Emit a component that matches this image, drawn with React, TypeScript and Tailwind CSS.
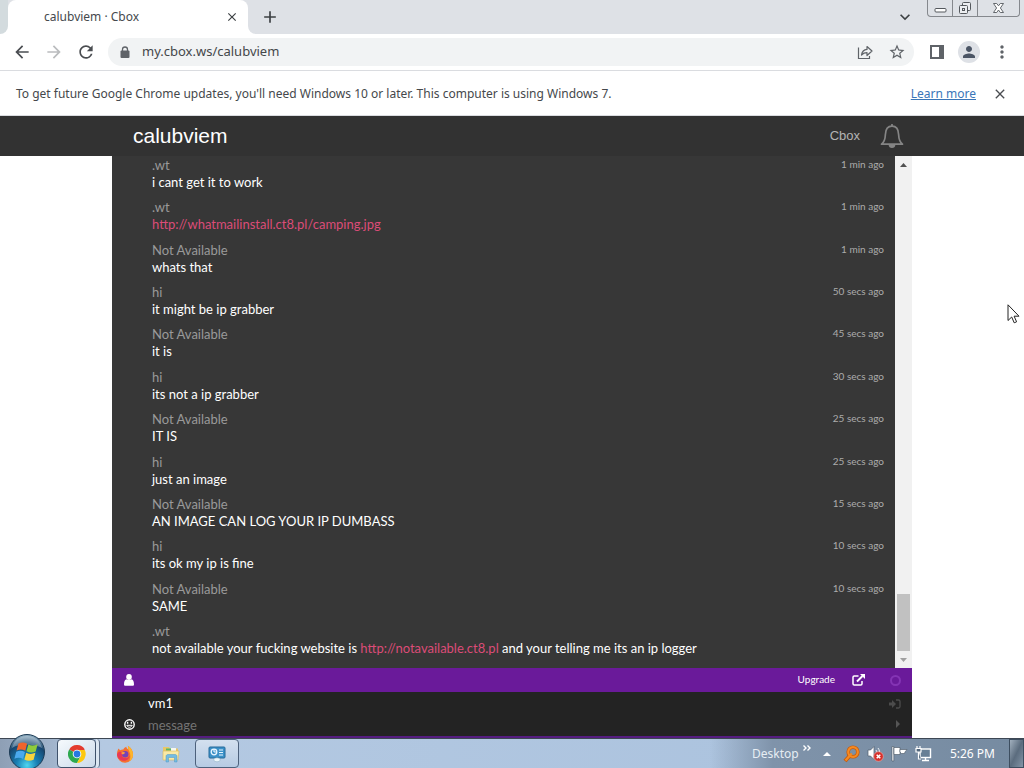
import { useState } from "react";
import {
  MdArrowBack,
  MdArrowForward,
  MdRefresh,
  MdStarOutline,
  MdPerson,
  MdMoreVert,
  MdClose,
  MdAdd,
  MdKeyboardArrowDown,
} from "react-icons/md";

type Message = {
  name: string;
  time: string;
  text?: string;
  link?: string;
  after?: string;
};

const messages: Message[] = [
  { name: ".wt", time: "1 min ago", text: "i cant get it to work" },
  { name: ".wt", time: "1 min ago", link: "http://whatmailinstall.ct8.pl/camping.jpg" },
  { name: "Not Available", time: "1 min ago", text: "whats that" },
  { name: "hi", time: "50 secs ago", text: "it might be ip grabber" },
  { name: "Not Available", time: "45 secs ago", text: "it is" },
  { name: "hi", time: "30 secs ago", text: "its not a ip grabber" },
  { name: "Not Available", time: "25 secs ago", text: "IT IS" },
  { name: "hi", time: "25 secs ago", text: "just an image" },
  { name: "Not Available", time: "15 secs ago", text: "AN IMAGE CAN LOG YOUR IP DUMBASS" },
  { name: "hi", time: "10 secs ago", text: "its ok my ip is fine" },
  { name: "Not Available", time: "10 secs ago", text: "SAME" },
  {
    name: ".wt",
    time: "",
    text: "not available your fucking website is ",
    link: "http://notavailable.ct8.pl",
    after: " and your telling me its an ip logger",
  },
];

const TabStrip = () => (
  <div className="flex h-[34px] shrink-0 items-start bg-[#dee1e6]">
    <div className="h-full w-2 bg-white">
      <div className="h-full rounded-br-lg bg-[#d3dbde]" />
    </div>
    <div className="flex h-full w-60 items-center justify-between rounded-t-lg bg-white pr-2 pl-9 text-xs text-[#45494d]">
      <span>calubviem · Cbox</span>
      <button aria-label="Close tab" className="flex size-4 items-center justify-center">
        <MdClose className="size-3.5 text-[#3c4043]" />
      </button>
    </div>
    <div className="h-full w-2 bg-white">
      <div className="h-full rounded-bl-lg bg-[#dee1e6]" />
    </div>
    <button aria-label="New tab" className="ml-1 flex h-full w-5 items-center justify-center">
      <MdAdd className="size-5 shrink-0 text-[#3c4043]" />
    </button>
    <button aria-label="Search tabs" className="mr-3 ml-auto flex h-full items-center">
      <MdKeyboardArrowDown className="size-5 text-[#3c4043]" />
    </button>
    <div className="mr-1 flex h-[17px] rounded-b-sm border border-t-0 border-[#85888d] text-[#54585d]">
      <button aria-label="Minimize" className="flex w-[25px] items-center justify-center border-r border-[#85888d]">
        <svg width="13" height="16" viewBox="0 0 13 16" fill="#fff" stroke="currentColor">
          <rect x="1" y="8.5" width="11" height="3.5" rx="1" />
        </svg>
      </button>
      <button aria-label="Restore" className="flex w-[25px] items-center justify-center border-r border-[#85888d]">
        <svg width="14" height="16" viewBox="0 0 14 16" fill="#eceef1" stroke="currentColor">
          <rect x="4.5" y="2.5" width="8" height="8" rx="1" />
          <rect x="1.5" y="5.5" width="8" height="8" rx="1" />
          <rect x="4.5" y="8.5" width="2" height="2" />
        </svg>
      </button>
      <button aria-label="Close" className="flex w-[41px] items-center justify-center">
        <svg width="13" height="16" viewBox="0 0 13 16" fill="#fff" stroke="currentColor" strokeWidth=".9">
          <path d="M1.5 3.5h3.2l1.8 2.3 1.8-2.3h3.2L8.4 8l3.1 4.5H8.3L6.5 10l-1.8 2.5H1.5L4.6 8z" />
        </svg>
      </button>
    </div>
  </div>
);

const Toolbar = () => (
  <div className="flex h-[37px] shrink-0 items-center border-b border-[#dadce0] bg-white px-3 text-[#5f6368]">
    <div className="flex items-center gap-3">
      <button aria-label="Back"><MdArrowBack className="size-5 text-[#4a4d51]" /></button>
      <button aria-label="Forward"><MdArrowForward className="size-5 text-[#babcbe]" /></button>
      <button aria-label="Reload"><MdRefresh className="size-5 text-[#4a4d51]" /></button>
    </div>
    <div className="ml-3 flex h-7 flex-1 items-center rounded-full bg-[#f1f3f4] px-2">
      <svg className="mx-1" width="10" height="13" viewBox="0 0 10 13">
        <path d="M2.500 5V3.500a2.500 2.500 0 0 1 5 0V5" fill="none" stroke="currentColor" strokeWidth="1.300" />
        <rect x=".5" y="4.500" width="9" height="7.500" rx="1" fill="currentColor" />
      </svg>
      <input
        aria-label="Address"
        readOnly
        value="my.cbox.ws/calubviem"
        className="ml-2 min-w-0 flex-1 bg-transparent text-[13px] text-[#44474a] outline-none"
      />
      <button aria-label="Share" className="mr-[15px]">
        <svg width="16" height="16" viewBox="0 0 16 16" fill="none" stroke="currentColor" strokeWidth="1.2">
          <path d="M1.500 3.500v11h11V12" />
          <path d="M4.500 11C5 7.600 7 5.600 10 5.400V2.500L15 7l-5 4.500V8.700C7.500 8.700 6 9.400 4.500 11z" strokeLinejoin="round" />
        </svg>
      </button>
      <button aria-label="Bookmark"><MdStarOutline className="size-[18px]" /></button>
    </div>
    <button aria-label="Side panel" className="ml-4">
      <svg width="14" height="14" viewBox="0 0 14 14" fill="currentColor">
        <path d="M0 0h14v14H0zM2 2v10h7V2z" fillRule="evenodd" />
      </svg>
    </button>
    <button aria-label="Profile" className="ml-3.5 flex size-[22px] items-center justify-center rounded-full bg-[#dee1e6]">
      <MdPerson className="size-[18px] text-[#4b5565]" />
    </button>
    <button aria-label="Menu" className="ml-3"><MdMoreVert className="size-5" /></button>
  </div>
);

const InfoBar = () => (
  <div className="flex h-[45px] shrink-0 items-center border-b border-[#dadce0] bg-white px-4 pt-px text-[#45484b]">
    <p className="flex-1 whitespace-nowrap">
      To get future Google Chrome updates, you'll need Windows 10 or later. This computer is using Windows 7.
    </p>
    <a href="#learn" className="text-[#3a76b8] underline">Learn more</a>
    <button aria-label="Dismiss" className="ml-4"><MdClose className="size-4 text-[#4a4d51]" /></button>
  </div>
);

const SiteHeader = () => (
  <header className="h-10 shrink-0 bg-[#323232] font-['Liberation_Sans',sans-serif]">
    <div className="mx-auto flex h-full max-w-[800px] items-center pr-2 pl-[21px]">
      <h1 className="flex-1 text-[21px] text-white">calubviem</h1>
      <a href="#cbox" className="text-[13px] text-[#b4b4b4]">Cbox</a>
      <button aria-label="Notifications" className="ml-5">
        <svg width="24" height="26" viewBox="0 0 24 26" fill="none" stroke="#858585" strokeWidth="1.7">
          <path d="M1.500 21.200C4.500 19 5.200 16.500 5.400 11.500C5.600 6.500 7.800 3.200 12 3.200s6.400 3.300 6.600 8.300c.2 5 .9 7.500 3.900 9.700z" strokeLinejoin="round" />
          <path d="M12 1v2" />
          <path d="M9.500 22c.2 3 4.800 3 5 0z" fill="#858585" />
        </svg>
      </button>
    </div>
  </header>
);

const MessageRow = ({ name, time, text, link, after }: Message) => (
  <li className="flex items-start text-[13px] leading-[17px]">
    <div className="flex-1">
      <div className="text-[#9a9a9a]">{name}</div>
      <div className="text-white">
        {text}
        {link && <a href={link} className="text-[#dc4c78]">{link}</a>}
        {after}
      </div>
    </div>
    <time className="text-[10px] leading-[15px] text-[#acacac]">{time}</time>
  </li>
);

const Scrollbar = () => (
  <div className="flex w-[17px] shrink-0 flex-col items-center bg-[#f1f1f1]">
    <button aria-label="Scroll up" className="flex h-[17px] items-center">
      <svg width="7" height="4" viewBox="0 0 7 4" fill="#505050"><path d="M0 4l3.500-4L7 4z" /></svg>
    </button>
    <div className="flex w-[13px] flex-1 items-end">
      <div className="h-[57px] w-full bg-[#c1c1c1]" />
    </div>
    <button aria-label="Scroll down" className="flex h-[17px] items-center">
      <svg width="7" height="4" viewBox="0 0 7 4" fill="#a0a0a0"><path d="M0 0l3.500 4L7 0z" /></svg>
    </button>
  </div>
);

const ChatForm = () => {
  const [nick, setNick] = useState("vm1");
  const [message, setMessage] = useState("");

  return (
    <form className="shrink-0 border-b-2 border-[#551c80] bg-[#232323]" onSubmit={(e) => e.preventDefault()}>
      <div className="flex h-6 items-center bg-[#6a1a9a] pr-[11px] pl-3 text-[10px] text-white">
        <svg width="10" height="12" viewBox="0 0 10 12" fill="#fff">
          <ellipse cx="5" cy="3" rx="2.800" ry="3" />
          <path d="M0 10.500C0 7 1 5.500 2.500 5.200c1.500 1.200 3.500 1.200 5 0C9 5.500 10 7 10 10.500c0 .8-.6 1.300-1.300 1.300H1.300C.6 11.800 0 11.300 0 10.500z" />
        </svg>
        <a href="#upgrade" className="ml-auto">Upgrade</a>
        <button type="button" aria-label="Pop out" className="ml-[17px]">
          <svg width="13" height="12" viewBox="0 0 13 12" fill="none" stroke="#fff" strokeWidth="1.500">
            <path d="M6.500 2H2.200C1.400 2 1 2.400 1 3.200v6.600c0 .8.400 1.200 1.200 1.200h6.600c.8 0 1.200-.4 1.200-1.200V7" />
            <path d="M5 7.500L10.500 2" strokeWidth="2" />
            <path d="M8 0h5v5z" fill="#fff" stroke="none" />
          </svg>
        </button>
        <button type="button" aria-label="Status" className="ml-[25px] size-[11px] rounded-full border-2 border-[#8434b4]" />
      </div>
      <div className="flex h-6 items-center pr-[11px] pl-9">
        <input
          aria-label="Name"
          value={nick}
          onChange={(e) => setNick(e.target.value)}
          className="min-w-0 flex-1 bg-transparent text-[13px] text-white outline-none"
        />
        <button type="button" aria-label="Log in">
          <svg width="12" height="10" viewBox="0 0 12 10" fill="#4c4c4c">
            <path d="M0 3.500h3V1l4 4-4 4V6.500H0z" />
            <path d="M7 1h2.500C10.300 1 11 1.700 11 2.500v5C11 8.300 10.300 9 9.500 9H7" fill="none" stroke="#4c4c4c" strokeWidth="1.300" />
          </svg>
        </button>
      </div>
      <div className="flex h-5 items-center pr-2 pl-3">
        <button type="button" aria-label="Smilies" className="mb-1">
          <svg width="11" height="11" viewBox="0 0 11 11" fill="none" stroke="#fff" strokeWidth="1.400">
            <circle cx="5.500" cy="5.500" r="4.700" />
            <path d="M2.800 6.300c.8 2.600 4.600 2.600 5.400 0z" strokeWidth="1" />
            <path d="M3.600 2.800v2M7.400 2.800v2" />
          </svg>
        </button>
        <input
          aria-label="Message"
          placeholder="message"
          value={message}
          onChange={(e) => setMessage(e.target.value)}
          className="ml-[13px] min-w-0 flex-1 bg-transparent text-[13px] text-white outline-none placeholder:text-[#747474]"
        />
        <button aria-label="Send" className="mb-1">
          <svg width="11" height="8" viewBox="0 0 11 8" fill="#555"><path d="M3 0l4 4-4 4z" /></svg>
        </button>
      </div>
    </form>
  );
};

const StartOrb = () => (
  <svg width="38" height="38" viewBox="0 0 38 38">
    <defs>
      <radialGradient id="orb" cx="50%" cy="88%" r="85%">
        <stop offset="0" stopColor="#4fd6f0" />
        <stop offset=".35" stopColor="#1a80b4" />
        <stop offset=".75" stopColor="#17466f" />
        <stop offset="1" stopColor="#8aa9bd" />
      </radialGradient>
    </defs>
    <circle cx="19" cy="19" r="17.500" fill="url(#orb)" stroke="#1c3a54" />
    <path d="M4 15C6 7 12 3 19 3s13 4 15 12c-8-4-21-5-30 0z" fill="#fff" opacity=".3" />
    <path d="M10.500 10.500c3.400-1.600 6-1.200 8.600.3l-1.800 7c-2.700-1.500-5.400-1.700-8.700-.4z" fill="#f0642c" />
    <path d="M20.300 11.400c3 1.600 6 1.500 9.300-.2l-1.900 7.300c-3.300 1.500-6.200 1.400-9.200-.2z" fill="#8fcb3c" />
    <path d="M8.200 18.700c3.300-1.300 6-1.100 8.700.4l-1.800 6.900c-2.700-1.600-5.300-1.700-8.700-.3z" fill="#4ba9ee" />
    <path d="M18.200 19.700c3 1.600 6 1.600 9.200.1l-1.800 6.900c-3.300 1.600-6.300 1.500-9.200-.1z" fill="#fbd43c" />
  </svg>
);

const ChromeIcon = () => (
  <svg width="18" height="18" viewBox="0 0 18 18">
    <path d="M9 9L1.200 4.500A9 9 0 0 1 16.800 4.500z" fill="#e33b2e" />
    <path d="M9 9L1.200 4.500A9 9 0 0 0 9 18L13 10.500z" fill="#2da94f" />
    <path d="M9 5h7.800A9 9 0 0 1 9 18l4-7z" fill="#fdc80f" />
    <circle cx="9" cy="9" r="4.300" fill="#fff" />
    <circle cx="9" cy="9" r="3.400" fill="#2878e0" />
  </svg>
);

const FirefoxIcon = () => (
  <svg width="18" height="18" viewBox="0 0 18 18">
    <path d="M2.500 3.500l1.600 1.800c1-.8 2-1 3.200-.9C8 3 9 2.200 10.300 1.700c.2 1.400 1 2 2.200 3C12.500 3.500 12 2 11.800.8c3 1.800 5.200 4.800 5.200 8.700A8 8 0 0 1 1 10C.8 7.500 1.500 5.300 2.500 3.500z" fill="#f6702f" />
    <path d="M11.800.8c3 1.800 5.200 4.800 5.200 8.700 0 3-1.500 5.500-3.700 6.900 1.500-3.500 1.600-7-.8-11.700C12.500 3.500 12 2 11.800.8z" fill="#fcb62d" />
    <path d="M1 10c.5 3 3 5.500 6.500 5.800 4 .2 6-2.500 6-5.300-.8 2-2.500 3-4.500 2.500C5.500 12.500 5 9 7.500 8L4 6.500C2 7 1 8.500 1 10z" fill="#e73755" />
    <circle cx="9.200" cy="9.200" r="3.200" fill="#7442b8" />
    <path d="M5 8c1.500-1.300 3-1 4.300-.2-.5 1-2 .9-2.300 1.900z" fill="#fda03a" />
  </svg>
);

const FolderIcon = () => (
  <svg width="18" height="18" viewBox="0 0 18 18">
    <path d="M1 2h6l1 1.500h8V14H1z" fill="#e9c867" />
    <path d="M4 3.500h5v2H4z" fill="#5bb86a" />
    <path d="M9 3h5v3H9z" fill="#f7f8f2" />
    <path d="M1 6h16l-1 9H1z" fill="#fae9a5" stroke="#dab95c" strokeWidth=".6" />
    <path d="M4 17V11.500C4 10 5 9.500 6 9.500h7c1 0 2 .5 2 2V17h-2.500v-4.500h-6V17z" fill="#74bce2" stroke="#4d99c7" strokeWidth=".5" />
  </svg>
);

const ControlIcon = () => (
  <svg width="18" height="18" viewBox="0 0 18 18">
    <rect x="1" y="2" width="16" height="11" rx="1" fill="#3b91c8" stroke="#276b9a" />
    <circle cx="6" cy="7" r="2.800" fill="none" stroke="#e7f5ff" strokeWidth="1.300" />
    <path d="M6 7V4.200M6 7h2.800M11 5h4M11 7.500h4M11 10h4" stroke="#e7f5ff" strokeWidth="1.200" />
    <ellipse cx="9" cy="14.800" rx="3.200" ry="2" fill="#eef7fa" stroke="#80a6bd" strokeWidth=".5" />
  </svg>
);

const TrayIcons = () => (
  <div className="flex items-center gap-[7px]">
    <svg width="17" height="18" viewBox="0 0 17 18" fill="none" stroke="#c4590d">
      <circle cx="10" cy="7" r="4.800" strokeWidth="3.600" />
      <path d="M6.500 11L2 16" strokeWidth="4" />
      <circle cx="10" cy="7" r="4.800" stroke="#f58a22" strokeWidth="2.200" />
      <path d="M8.800 8.400L2.500 15.500" stroke="#f58a22" strokeWidth="2.200" />
    </svg>
    <svg width="17" height="17" viewBox="0 0 17 17">
      <path d="M1 5h2.500L7 1.500v13L3.500 11H1z" fill="#fff" stroke="#50606f" strokeWidth=".7" />
      <path d="M9 5c1 1.500 1 4 0 5.500M11 3c1.500 2 1.800 4 1.500 6" fill="none" stroke="#e8eef3" />
      <circle cx="11.500" cy="11.500" r="4.800" fill="#d5302c" stroke="#f2b0aa" strokeWidth=".6" />
      <path d="M9.700 9.700l3.600 3.600M13.300 9.700l-3.600 3.600" stroke="#fff" strokeWidth="1.500" />
    </svg>
    <svg width="17" height="17" viewBox="0 0 17 17" fill="#fff" stroke="#44525f" strokeWidth=".6">
      <path d="M1 1.500h1.800V16H1z" />
      <path d="M3 2.500h6v7H3z" />
      <path d="M9 4.500h7c-1 1.500-2 1.700-2.500 4H10.500L9 7z" />
    </svg>
    <svg width="17" height="17" viewBox="0 0 17 17">
      <rect x="5" y="4" width="10.500" height="8.500" fill="#687f95" stroke="#fff" strokeWidth="1.400" />
      <path d="M7 15.500h7M10.500 13v2" stroke="#fff" strokeWidth="1.400" />
      <path d="M1 3.500h5V7H1zM2 1v3M5 1v3M3.500 7v7H6" fill="#52677c" stroke="#fff" strokeWidth="1.200" />
    </svg>
  </div>
);

const Taskbar = () => (
  <footer className="flex h-[30px] shrink-0 items-center border-t border-[#3d4754] bg-linear-to-r from-[#8e9fb5] via-[#b4c9e2] via-10% to-[#a9c1dd] text-white">
    <button aria-label="Start" className="relative z-10 -mt-1 ml-2 flex h-full items-center">
      <StartOrb />
    </button>
    <button aria-label="Google Chrome" className="ml-[11px] flex h-[29px] w-[39px] items-center justify-center rounded-sm border border-[#3f526b] bg-linear-to-br from-[#f6fafd] to-[#cbdaea]">
      <ChromeIcon />
    </button>
    <div className="h-[29px] w-1 rounded-r-sm border-r border-[#5c6f88] bg-[#dbe6f1]" />
    <button aria-label="Firefox" className="ml-4 flex w-[18px]"><FirefoxIcon /></button>
    <button aria-label="Explorer" className="ml-7 flex w-[18px]"><FolderIcon /></button>
    <button aria-label="Control Panel" className="ml-[15px] flex h-[29px] w-11 items-center justify-center rounded-sm border border-[#4d617c] bg-linear-to-b from-[#d3e0ef] to-[#b7cbe3]">
      <ControlIcon />
    </button>
    <div className="ml-auto flex h-full w-[314px] items-center bg-linear-to-r from-transparent via-[#7f93aa] via-20% to-[#768ba1] text-xs">
      <span className="ml-[42px] text-[#e6edf3]">Desktop</span>
      <button aria-label="More toolbars" className="ml-1 flex pb-3">
        <svg width="8" height="6" viewBox="0 0 8 6" fill="none" stroke="#fff" strokeWidth="1.400">
          <path d="M.5.500L3 3 .5 5.500M4.500.500L7 3 4.500 5.500" />
        </svg>
      </button>
      <button aria-label="Show hidden icons" className="mr-3 ml-auto">
        <svg width="8" height="4" viewBox="0 0 8 4" fill="#fff"><path d="M0 4l4-4 4 4z" /></svg>
      </button>
      <TrayIcons />
      <span className="mr-3.5 ml-[18px]">5:26 PM</span>
      <button aria-label="Show desktop" className="h-full w-[15px] border border-[#3d4e60] bg-linear-to-br from-[#a2b0be] via-[#5b6c7e] to-[#8395a7]" />
    </div>
  </footer>
);

const App = () => {
  return (
    <div className="relative flex h-screen flex-col overflow-hidden bg-white font-['Noto_Sans',sans-serif] text-xs">
      <TabStrip />
      <Toolbar />
      <InfoBar />
      <SiteHeader />
      <main className="mx-auto flex min-h-0 w-full max-w-[800px] flex-1 flex-col font-[Lato,sans-serif]">
        <div className="flex min-h-0 flex-1 bg-[#373737]">
          <ul className="flex flex-1 flex-col justify-between pt-px pr-[11px] pb-[11px] pl-10">
            {messages.map((m, i) => (
              <MessageRow key={i} {...m} />
            ))}
          </ul>
          <Scrollbar />
        </div>
        <ChatForm />
      </main>
      <Taskbar />

      {/* Mouse pointer */}
      <svg className="pointer-events-none absolute top-[304px] right-1" width="13" height="20" viewBox="0 0 13 20">
        <path d="M1 .8v15.700l3.700-3.500 2.500 5.800 2.400-1-2.500-5.600H12z" fill="#fff" stroke="#222" />
      </svg>
    </div>
  );
};

export default App;
